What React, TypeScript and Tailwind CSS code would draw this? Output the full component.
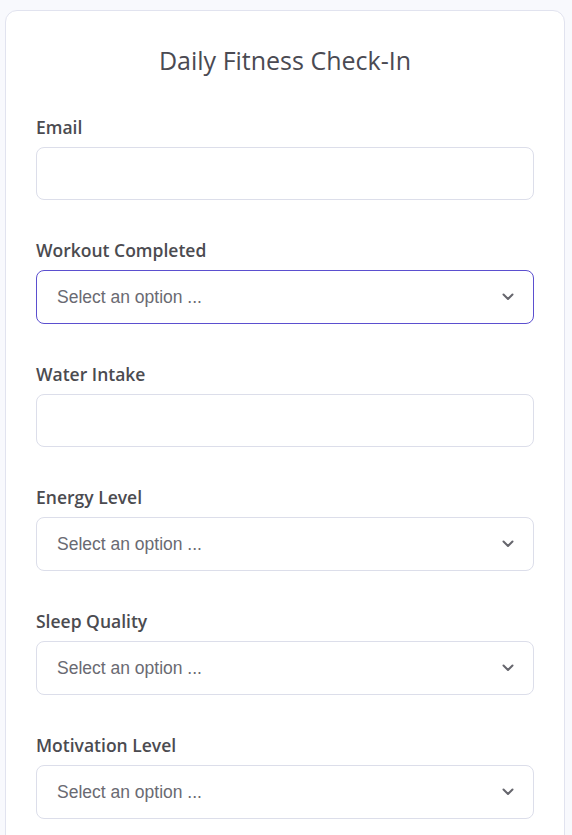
import { useState } from "react";

type Field = {
  name: string;
  label: string;
  kind: "input" | "select";
};

const fields: Field[] = [
  { name: "email", label: "Email", kind: "input" },
  { name: "workout", label: "Workout Completed", kind: "select" },
  { name: "water", label: "Water Intake", kind: "input" },
  { name: "energy", label: "Energy Level", kind: "select" },
  { name: "sleep", label: "Sleep Quality", kind: "select" },
  { name: "motivation", label: "Motivation Level", kind: "select" },
];

function Chevron() {
  return (
    <svg width="12" height="8" viewBox="0 0 12 8" fill="none" className="shrink-0">
      <path d="M1.5 1.5 6 6l4.5-4.5" stroke="#66666d" strokeWidth="2" strokeLinecap="round" strokeLinejoin="round" />
    </svg>
  );
}

export default function App() {
  const [focused] = useState("workout");

  return (
    <div className="min-h-screen bg-[#f8f9fd] pt-[10px] pr-[7px] pl-[5px]">
      <div className="rounded-[12px] border border-[#e1e3ef] bg-white px-[30px] pt-[30px] pb-10 font-['Open_Sans',sans-serif]">
        <h1 className="text-center text-[25px] leading-[38px] text-[#4a4a52]">Daily Fitness Check-In</h1>

        <div className="mt-[36px]">
          {fields.map((f) => (
            <div key={f.name} className="mb-[38px]">
              <label className="block text-[17.5px] leading-[24px] font-semibold text-[#4b4b50]">{f.label}</label>
              {f.kind === "input" ? (
                <input
                  type="text"
                  className="mt-2 block h-[53px] w-full rounded-[8px] border border-[#dcdeea] bg-white px-5 text-[17px] outline-none"
                />
              ) : (
                <div
                  className={
                    focused === f.name
                      ? "mt-2 flex h-[54px] w-full items-center justify-between rounded-[8px] border border-[#5b4fcf] bg-white pr-[19px] pl-5"
                      : "mt-2 flex h-[54px] w-full items-center justify-between rounded-[8px] border border-[#dcdeea] bg-white pr-[19px] pl-5"
                  }
                >
                  <span className="font-['Liberation_Sans',Arial,sans-serif] text-[17.5px] text-[#6a6a72]">Select an option ...</span>
                  <Chevron />
                </div>
              )}
            </div>
          ))}
        </div>
      </div>
    </div>
  );
}
